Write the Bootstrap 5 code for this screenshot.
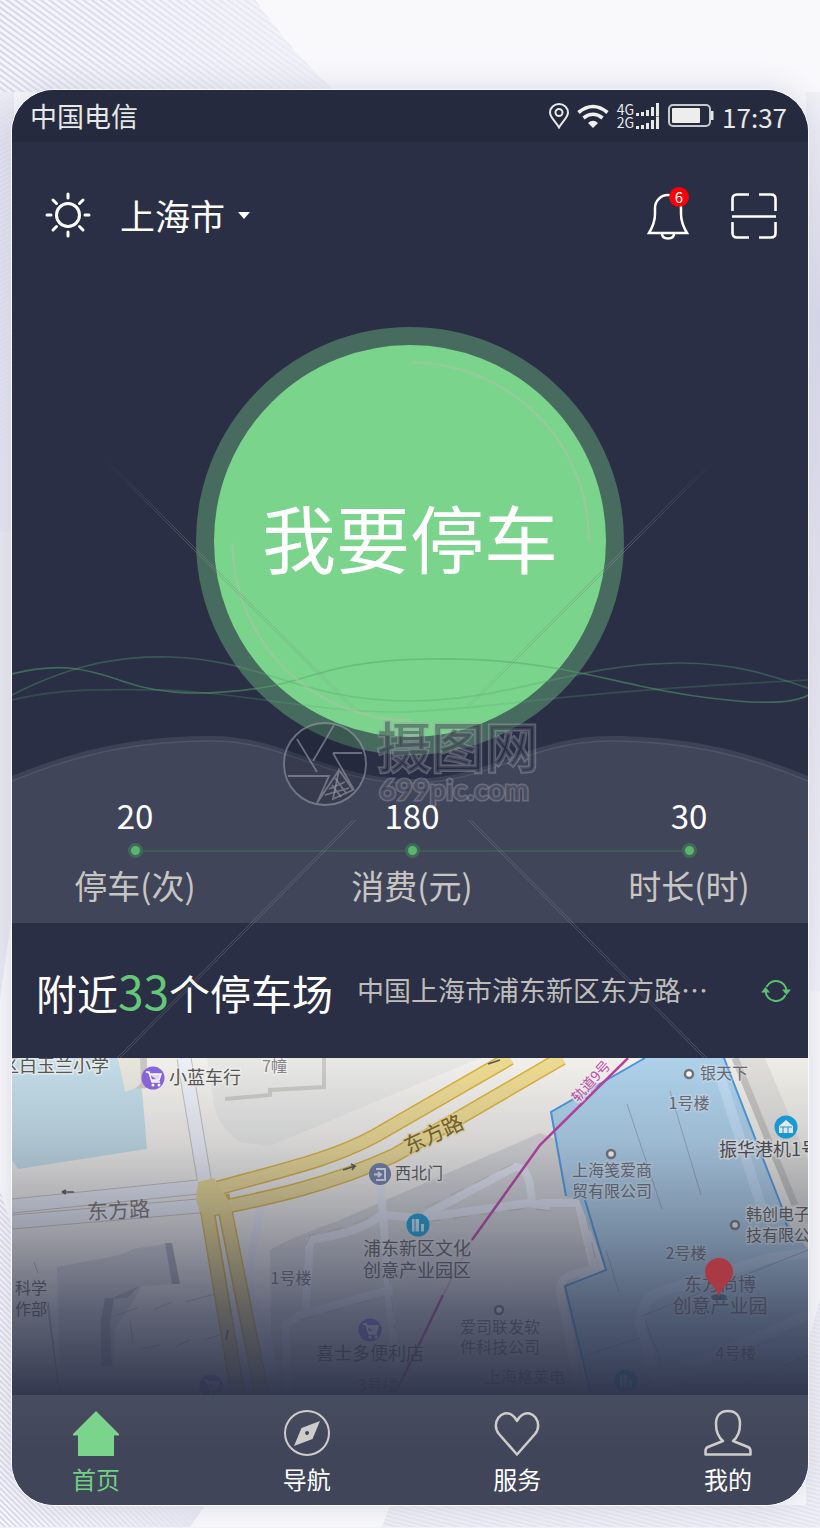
<!DOCTYPE html>
<html lang="zh-CN">
<head>
<meta charset="utf-8">
<meta name="viewport" content="width=device-width, initial-scale=1">
<title>停车</title>
<link href="https://cdn.jsdelivr.net/npm/bootstrap@5.3.0/dist/css/bootstrap.min.css" rel="stylesheet">
<script src="https://cdn.jsdelivr.net/npm/bootstrap@5.3.0/dist/js/bootstrap.bundle.min.js" defer></script>
<style>
  body { font-family: "Noto Sans CJK SC", sans-serif; background: #f1f1f8; color: #fff; }
  .page-wrap { padding: 90px 12px 22px; }
  .backdrop { inset: 0; z-index: -1; }
  .phone { background: #2a2f45; border-radius: 42px; box-shadow: 0 0 0 1px #fafafd, 0 0 30px #d4d4e2; }
  .status-bar { height: 52px; padding: 0 21px 0 18px; background: #252a3e; font-size: 27px; color: #e8e8e6; }
  .status-bar time { font-size: 26px; }
  .status-icons { gap: 8px; }
  .net-tags { font-size: 14px; line-height: 13px; }
  .top-bar { padding: 50px 31px 0 33px; height: 118px; }
  .plain-btn { background: none; border: 0; padding: 0; color: inherit; }
  .city-btn { font-size: 35px; line-height: 46px; gap: 13px; margin-left: 29px; }
  .city-caret { border: 6px solid transparent; border-top: 7px solid #fff; border-bottom: 0; }
  .top-actions { gap: 42px; }
  .count-badge { top: -5px; right: 0; width: 20px; height: 20px; background: #fb0007; font-size: 15px; line-height: 20px; }
  .park-btn { width: 428px; height: 428px; margin-top: 67px; padding: 0 0 12px; border: 18px solid #476b5e; background: #7ad48b; color: #fff; font-size: 74px; z-index: 1; }
  .over-art { inset: 0; pointer-events: none; z-index: 2; }
  .hill-art { inset: 0; }
  .stats { padding: 39px 58px 18px 62px; z-index: 1; }
  .stats::before { content: ""; position: absolute; left: 123px; right: 119px; top: 95px; height: 2px; background: #3d5c55; }
  .stat-item { width: 122px; }
  .stat-num { font-size: 33px; line-height: 42px; }
  .stat-dot { width: 15px; height: 15px; margin: 7px 0; border: 3px solid #40695a; background: #5bb56e; position: relative; }
  .stat-name { font-size: 33px; line-height: 40px; color: #c8c6c2; }
  .nearby { height: 135px; padding: 0 17px 0 24px; }
  .nearby h2 { font-size: 41px; font-weight: 400; }
  .nearby h2 span { font-size: 46px; color: #65c878; }
  .address { font-size: 27px; color: #bfbdb9; margin-left: 24px; }
  .map-art { height: 337px; }
  .tab-bar { height: 110px; padding: 12px 56px 0 60px; background: linear-gradient(#474d60, #414559 50%); }
  .tab-link { color: #fff; font-size: 24px; line-height: 36px; gap: 4px; text-decoration: none; }
  .tab-link.active { color: #72cf83; }
</style>
</head>
<body>
<div class="page-wrap position-relative">
  <svg class="backdrop position-absolute w-100 h-100" viewBox="0 0 820 1528" preserveAspectRatio="none" aria-hidden="true">
    <defs>
      <pattern id="stripeDown" width="5" height="5" patternUnits="userSpaceOnUse" patternTransform="rotate(36)"><path d="M0 1H5" stroke="#cdcee5" stroke-width="1.600"/></pattern>
      <pattern id="stripeUp" width="4" height="4" patternUnits="userSpaceOnUse" patternTransform="rotate(-28)"><path d="M0 1H4" stroke="#c9cbe0" stroke-width="1.200"/></pattern>
      <pattern id="stripeSoft" width="4" height="4" patternUnits="userSpaceOnUse" patternTransform="rotate(15)"><path d="M0 1H4" stroke="#dcdcea"/></pattern>
      <pattern id="stripeDiag" width="4" height="4" patternUnits="userSpaceOnUse" patternTransform="rotate(45)"><path d="M0 1H4" stroke="#c8c9e1" stroke-width="1.400"/></pattern>
      <linearGradient id="fadeRight"><stop offset="0" stop-color="#f4f4fa" stop-opacity="0"/><stop offset="1" stop-color="#f0f0f6" stop-opacity=".9"/></linearGradient>
      <linearGradient id="fadeCorner"><stop offset="0" stop-color="#f4f4fa" stop-opacity="0"/><stop offset="1" stop-color="#e6e6f2"/></linearGradient>
      <linearGradient id="leftFade" x1="0" y1="0" x2="0" y2="1"><stop offset="0" stop-color="#eeeef6" stop-opacity=".9"/><stop offset=".15" stop-color="#e2e3f0" stop-opacity=".3"/><stop offset="1" stop-color="#e0e1ef"/></linearGradient>
      <linearGradient id="sideFade" x1="0" y1="0" x2="0" y2="1"><stop offset="0" stop-color="#f0f0f6"/><stop offset=".25" stop-color="#d3d4e8"/><stop offset=".6" stop-color="#e2e2ef"/><stop offset="1" stop-color="#f1f1f8"/></linearGradient>
    </defs>
    <rect width="820" height="1528" fill="#f9f9fc"/>
    <path d="M0 0H255Q290 50 335 92H0Z" fill="#f4f4fa"/>
    <path d="M0 0H255Q290 50 335 92H0Z" fill="url(#stripeDown)"/>
    <path d="M0 0H255Q290 50 335 92H0Z" fill="url(#fadeRight)"/>
    <rect y="92" width="14" height="440" fill="#dfe0ee"/>
    <rect y="92" width="14" height="440" fill="url(#stripeUp)"/>
    <rect y="92" width="14" height="440" fill="url(#leftFade)"/>
    <path d="M0 532H14V900L0 1000Z" fill="#e6e6f1"/>
    <rect x="806" y="92" width="14" height="900" fill="url(#sideFade)"/>
    <path d="M0 1190Q60 1400 205 1506L190 1528H0Z" fill="url(#stripeDiag)"/>
    <path d="M0 1190Q60 1400 205 1506L190 1528H0Z" fill="url(#fadeCorner)"/>
    <path d="M390 1506H806V1350L820 1300V1528H382Z" fill="#efeff6"/>
    <path d="M390 1506H806V1350L820 1300V1528H382Z" fill="url(#stripeSoft)"/>
  </svg>

  <main class="phone position-relative overflow-hidden d-flex flex-column">
    <div class="status-bar d-flex align-items-center justify-content-between">
      <span>中国电信</span>
      <div class="status-icons d-flex align-items-center">
        <svg width="20" height="26" viewBox="0 0 20 26" fill="none" stroke="#e8e8e6" stroke-width="2" aria-hidden="true"><path d="M10 24.500C7 19 1 14.500 1 9.500A9 8.500 0 0 1 19 9.500C19 14.500 13 19 10 24.500Z"/><circle cx="10" cy="9.500" r="3.500"/></svg>
        <svg width="32" height="25" viewBox="0 0 32 25" fill="none" stroke="#f0f0ee" stroke-width="3.600" aria-hidden="true"><path d="M1.500 8.500Q16-3.500 30.500 8.500M6.500 14Q16 6.500 25.500 14"/><path d="M11 19Q16 14.500 21 19L16 24Z" fill="#f0f0ee" stroke="none"/></svg>
        <div class="d-flex align-items-center">
          <div class="net-tags">4G<br>2G</div>
          <svg width="26" height="27" viewBox="0 0 26 27" fill="#e8e8e6" aria-hidden="true"><path d="M2 10h3v3H2zM7 9h3v4H7zM12 7h3v6h-3zM17 4h3v9h-3zM22 0h3v13h-3zM2 23h3v3H2zM7 22h3v4H7zM12 20h3v6h-3zM17 17h3v9h-3zM22 13.500h3V26h-3z"/></svg>
        </div>
        <svg width="46" height="24" viewBox="0 0 46 24" aria-hidden="true"><rect x="1" y="1" width="41" height="21" rx="4" fill="none" stroke="#c3cbcc" stroke-width="2"/><rect x="4" y="4" width="28" height="15" rx="1" fill="#ededeb"/><path d="M43 7h2.500v9H43z" fill="#e8e8e6"/></svg>
        <time>17:37</time>
      </div>
    </div>

    <section class="position-relative">
      <svg class="hill-art position-absolute w-100 h-100" viewBox="12 142 796 781" preserveAspectRatio="none" aria-hidden="true">
        <path d="M12 776C90 744 150 736 212 736C285 736 330 779 411 779C490 779 530 736 610 736C690 736 750 752 808 776V923H12Z" fill="#3d4257"/>
        <path d="M12 781C90 749 150 741 212 741C285 741 330 783 411 783C490 783 530 741 610 741C690 741 750 757 808 781V923H12Z" fill="#414559"/>
        <path d="M12 781C90 749 150 741 212 741C285 741 330 783 411 783C490 783 530 741 610 741C690 741 750 757 808 781" fill="none" stroke="#50546a" stroke-width="1.500"/>
      </svg>
      <header class="top-bar position-relative d-flex justify-content-between align-items-start">
        <div class="d-flex align-items-center">
          <svg width="46" height="46" viewBox="0 0 46 46" fill="none" stroke="#fff" stroke-width="3" stroke-linecap="round" aria-hidden="true"><circle cx="23" cy="23" r="11.500"/><path d="M23 2v4M23 40v4M2 23h4M40 23h4M8 8l3.500 3.500M34.500 34.500L38 38M8 38l3.500-3.500M34.500 11.500L38 8"/></svg>
          <button type="button" class="plain-btn city-btn d-flex align-items-center">上海市 <i class="city-caret"></i></button>
        </div>
        <div class="top-actions d-flex align-items-center">
          <button type="button" class="plain-btn position-relative" aria-label="消息">
            <svg class="d-block" width="42" height="48" viewBox="0 0 42 48" fill="none" stroke="#fff" stroke-width="2.500" aria-hidden="true"><path d="M2 41Q8 31 8 22V16A13 13 0 0 1 34 16V22Q34 31 40 41Z"/><path d="M15 41.500Q15 46.500 21 46.500T27 41.500"/></svg>
            <span class="count-badge position-absolute rounded-circle text-center">6</span>
          </button>
          <button type="button" class="plain-btn" aria-label="扫一扫">
            <svg class="d-block" width="46" height="48" viewBox="0 0 46 48" fill="none" stroke="#fff" stroke-width="2.600" aria-hidden="true"><path d="M1.500 19V7Q1.500 2.500 6 2.500H18M28 2.500H40Q44.500 2.500 44.500 7V19M44.500 30V41Q44.500 45.500 40 45.500H28M18 45.500H6Q1.500 45.500 1.500 41V30M1 24.500H45"/></svg>
          </button>
        </div>
      </header>
      <button type="button" class="park-btn position-relative rounded-circle d-block mx-auto">我要停车</button>
      <div class="stats position-relative d-flex justify-content-between text-center">
        <div class="stat-item d-flex flex-column align-items-center"><div class="stat-num">20</div><i class="stat-dot rounded-circle"></i><div class="stat-name text-nowrap">停车(次)</div></div>
        <div class="stat-item d-flex flex-column align-items-center"><div class="stat-num">180</div><i class="stat-dot rounded-circle"></i><div class="stat-name text-nowrap">消费(元)</div></div>
        <div class="stat-item d-flex flex-column align-items-center"><div class="stat-num">30</div><i class="stat-dot rounded-circle"></i><div class="stat-name text-nowrap">时长(时)</div></div>
      </div>
      <svg class="over-art position-absolute w-100 h-100" viewBox="12 142 796 781" fill="none" aria-hidden="true">
        <g stroke="#58a870" stroke-width="1.700">
          <path stroke-opacity=".5" d="M12 674C60 662 85 668 125 682S210 695 260 688S330 660 430 659S580 673 640 686S785 710 808 695"/>
          <path stroke-opacity=".35" d="M12 695C80 660 130 656 170 657C265 660 300 701 410 701C510 701 575 663 680 663C735 663 770 675 808 688"/>
          <path stroke-opacity=".25" d="M12 700C60 688 110 689 165 690C240 692 310 712 400 712C490 710 540 693 808 680"/>
        </g>
        <path d="M411 362.500A178 178 0 0 1 589 541M232.500 543A178 178 0 0 0 411 720.500" stroke="#a0c6a4" stroke-opacity=".6" stroke-width="3"/>
      </svg>
    </section>

    <section class="nearby d-flex align-items-center">
      <h2 class="m-0 text-nowrap">附近<span>33</span>个停车场</h2>
      <span class="address text-nowrap">中国上海市浦东新区东方路…</span>
      <button type="button" class="plain-btn ms-auto" aria-label="刷新">
        <svg class="d-block" width="30" height="26" viewBox="0 0 30 26" fill="none" stroke="#5cbf72" stroke-width="2" aria-hidden="true"><path d="M5.500 9A10.500 10.500 0 0 1 25.500 13M24.500 17A10.500 10.500 0 0 1 4.500 13"/><path d="M21 11.500h9L25.500 17zM0 14.500h9L4.500 9z" fill="#5cbf72" stroke="none"/></svg>
      </button>
    </section>

    <svg class="map-art d-block w-100" viewBox="12 1058 796 337" preserveAspectRatio="xMidYMid slice" role="img" aria-label="地图">
      <defs>
        <linearGradient id="dusk" x1="0" y1="0" x2="0" y2="1"><stop offset="0" stop-color="#40465a" stop-opacity="0"/><stop offset=".25" stop-color="#44475a" stop-opacity=".17"/><stop offset=".5" stop-color="#3d4256" stop-opacity=".46"/><stop offset=".75" stop-color="#353b53" stop-opacity=".77"/><stop offset="1" stop-color="#2e344b" stop-opacity=".98"/></linearGradient>
      </defs>
      <rect x="12" y="1058" width="796" height="337" fill="#f2f0eb"/>
      <path d="M12 1058H123L142 1090L147 1149L18 1169L12 1160Z" fill="#c3dce8"/>
      <path d="M118 1058H147V1084L125 1092Z" fill="#e9e7dc"/>
      <path d="M140 1058H147V1088L135 1089L141 1083Z" fill="#c9c8c3"/>
      <path d="M207 1058H480L270 1146L240 1142Q217 1125 214 1105Z" fill="#e8e8e5"/>
      <path d="M225 1099L270 1095V1090L324 1087V1058" fill="none" stroke="#cbcac5" stroke-width="4"/>
      <path d="M270 1250Q285 1240 340 1220L540 1133L558 1140L575 1205L590 1270L570 1285L585 1395H272Z" fill="#d9d9da"/>
      <path d="M57 1267L120 1255L133 1249L170 1243L178 1284L142 1286L115 1330L113 1368H60Z" fill="#d8d9dc"/>
      <path d="M165 1243H172L180 1284H172ZM105 1298H114L110 1322L112 1366H101V1320Z" fill="#a8abb7"/>
      <path d="M114 1298L138 1287L128 1297ZM34 1262l4 11" fill="#b5b6be" stroke="#b0b1b8"/>
      <g fill="none" stroke="#bcb9b3">
        <g stroke-width="15"><path d="M184 1058L206 1190M12 1206L208 1186M12 1222L210 1205" stroke="#c3bfb8"/><path d="M184 1058L206 1190M12 1206L208 1186M12 1222L210 1205" stroke="#edf0f8" stroke-width="13"/></g>
        <path d="M108 1318L138 1308M155 1309L172 1302M185 1302L215 1294M140 1349L160 1345M175 1347L190 1340M205 1340L220 1335M130 1320L133 1343M47 1305L60 1395"/>
        <path d="M48 1302L58 1384" stroke="#9a9ca8"/>
      </g>
      <g fill="none" stroke="#e8ebf5" stroke-width="8" stroke-linejoin="round">
        <path d="M262 1200L249 1270Q248 1300 265 1325L277 1395"/>
        <path d="M380 1180L383 1215L390 1310L397 1370M383 1213Q365 1232 310 1240L306 1310M383 1215L420 1218L528 1203L550 1206M425 1215L515 1167Q530 1165 532 1203M385 1291L300 1315L285 1325L288 1395"/>
        <path d="M540 1203L580 1203L597 1268L570 1275Q555 1282 562 1300L580 1395"/>
      </g>
      <g fill="none" stroke="#c9c5b8" stroke-dasharray="16 12"><path d="M306 1245L310 1235Q365 1225 378 1210M425 1222L528 1208L550 1211M425 1208L513 1164M300 1320L380 1297M386 1240L395 1330M586 1215L596 1262"/></g>
      <path d="M551 1112L645 1058H724L790 1225L808 1250V1395H592L565 1286L606 1270L579 1200L566 1196Z" fill="#aed1ea"/>
      <path d="M700 1058H808V1250L780 1205Z" fill="#efede6"/><path d="M735 1058H765L808 1160V1225L793 1205Z" fill="#e0dfda"/>
      <path d="M735 1058L795 1205" stroke="#c4c3bf" stroke-width="7"/>
      <path d="M700 1058H724L780 1205L790 1235L808 1250H750Z" fill="#aed1ea"/>
      <g fill="none" stroke="#c0dcf5" stroke-width="10" stroke-linejoin="round"><path d="M720 1075L764 1215M808 1253L770 1258L660 1292Q640 1300 640 1325L660 1395M660 1380L808 1315M660 1395L690 1360"/></g>
      <path d="M627 1104L662 1209M670 1091L701 1195M606 1250L619 1292M586 1355L640 1338M642 1316L808 1250M645 1320L662 1365M725 1395L808 1355" stroke="#8fa7bc" fill="none"/>
      <path d="M645 1058L551 1112L566 1196M585 1200L606 1270L565 1286L591 1395M724 1058L781 1205L788 1230" fill="none" stroke="#4c98e0" stroke-width="2"/>
      <g fill="none" stroke-linejoin="round">
        <path d="M204 1192C290 1168 330 1160 375 1136L510 1058M208 1210C270 1198 330 1185 395 1155L562 1058" stroke="#d9b13c" stroke-width="15"/>
        <path d="M204 1190L238 1395M222 1195L262 1395" stroke="#d9b13c" stroke-width="15"/>
        <path d="M204 1192C290 1168 330 1160 375 1136L510 1058M208 1210C270 1198 330 1185 395 1155L562 1058" stroke="#eedb92" stroke-width="12"/>
        <path d="M204 1192L238 1395M224 1204L262 1395" stroke="#ecd683" stroke-width="12"/>
      </g>
      <path d="M198 1182L214 1178L232 1206L226 1212L200 1212L196 1200Z" fill="#ecd98c"/>
      <path d="M628 1058L540 1145L472 1240M443 1295L397 1390" stroke="#bd3fa0" stroke-width="2.500" fill="none"/>
      <path d="M472 1240L443 1295" stroke="#d9a0cf" stroke-width="1.500"/>
      <g stroke="#555" fill="none" stroke-width="1.500"><path d="M74 1192H62l4-2M62 1192l4 2M343 1170l12-4-4-2M355 1166l-3 4M500 1060l-12 4M228 1330l-2 10"/></g>
      <g font-size="18" fill="#555" stroke="#f5f4f0" stroke-opacity=".75" stroke-width="3" paint-order="stroke">
        <text x="1" y="1072">区白玉兰小学</text><text x="169" y="1084">小蓝车行</text><text x="395" y="1179" font-size="16">西北门</text>
        <text x="262" y="1072" font-size="16" fill="#888">7幢</text>
        <text x="87" y="1218" font-size="21" fill="#776d66" stroke="none" transform="rotate(-3 117 1210)">东方路</text>
        <text x="401" y="1142" font-size="21" fill="#786324" stroke="#eedb92" transform="rotate(-25 432 1132)">东方路</text>
        <text x="578" y="1103" font-size="14" fill="#c34fad" transform="rotate(-48 578 1103)">轨道9号</text>
        <g text-anchor="middle" stroke-opacity=".3">
          <text x="417" y="1255">浦东新区文化</text><text x="417" y="1277">创意产业园区</text><text x="370" y="1360">喜士多便利店</text>
          <g font-size="16" fill="#696974"><text x="291" y="1284">1号楼</text><text x="500" y="1333">爱司联发软</text><text x="500" y="1353">件科技公司</text><text x="612" y="1176">上海笺爱商</text><text x="612" y="1197">贸有限公司</text><text x="724" y="1079">银天下</text><text x="689" y="1109">1号楼</text><text x="686" y="1259">2号楼</text><text x="736" y="1359">4号楼</text><text x="378" y="1391">3号楼</text><text x="525" y="1383">上海格莱电</text></g>
          <g fill="#6d6873"><text x="720" y="1291">东方尚博</text><text x="720" y="1313" font-size="19">创意产业园</text></g>
        </g>
        <g font-size="16"><text x="719" y="1156" font-size="18" fill="#484850">振华港机1号</text><text x="746" y="1220">韩创电子科</text><text x="746" y="1241">技有限公司</text><text x="15" y="1294" stroke-opacity=".2">科学</text><text x="15" y="1315" stroke-opacity=".2">作部</text></g>
      </g>
      <g fill="#fff" stroke="#747477" stroke-width="2.500"><circle cx="689" cy="1074" r="4"/><circle cx="611" cy="1154" r="4"/><circle cx="735" cy="1225" r="4"/><circle cx="499" cy="1310" r="4"/></g>
      <g id="cartPin"><circle cx="153" cy="1078" r="11.500" fill="#8a66e0"/><path d="M146 1072h3l3 10h8M149 1074h12l-2 6h-8" stroke="#fff" stroke-width="1.500" fill="#e6dcff"/><circle cx="153" cy="1085" r="1.500" fill="#fff"/><circle cx="159" cy="1085" r="1.500" fill="#fff"/></g>
      <use href="#cartPin" x="217" y="252"/><use href="#cartPin" x="58" y="308"/>
      <circle cx="380" cy="1174" r="11" fill="#6e7da6"/><path d="M376 1169h9v11h-9M374 1174.500h7M378 1172l3 2.500-3 2.500" stroke="#dfe3f0" stroke-width="2" fill="none"/>
      <g id="officePin"><circle cx="418" cy="1225" r="11.500" fill="#109ed8"/><path d="M412 1219h7v13h-7zM421 1224h3v8h-3z" fill="#cfeefa"/><path d="M415 1219v13M410 1232h16" stroke="#109ed8"/></g>
      <use href="#officePin" x="208" y="156"/>
      <circle cx="786" cy="1127" r="11.500" fill="#10a5e6"/><path d="M779 1126l7-6 7 6v7h-14z" fill="#fff"/><path d="M780 1127h12M783 1127v6M788 1127v6" stroke="#10a5e6"/>
      <ellipse cx="719" cy="1297" rx="8" ry="3" fill="#1e4e75" fill-opacity=".7"/>
      <rect x="12" y="1058" width="796" height="337" fill="url(#dusk)"/>
      <path d="M719 1297C716 1285 705 1282 705 1272A14 14 0 0 1 733 1272C733 1282 722 1285 719 1297Z" fill="#a93a43"/>
    </svg>

    <nav class="tab-bar d-flex justify-content-between align-items-start" aria-label="主导航">
      <a href="#" class="tab-link active d-flex flex-column align-items-center" aria-current="page">
        <svg width="48" height="50" viewBox="0 0 48 50" fill="#7ad48b" aria-hidden="true"><path d="M24 4L47 27V28.500H42V49H6V28.500H1V27Z"/></svg>首页</a>
      <a href="#" class="tab-link d-flex flex-column align-items-center">
        <svg width="48" height="50" viewBox="0 0 48 50" aria-hidden="true"><circle cx="24" cy="26" r="22" fill="none" stroke="#cfcdc9" stroke-width="2"/><path fill="#cfcdc9" fill-rule="evenodd" d="M37 14L29.500 32L11 39L18.500 21ZM24 24a2 2 0 1 0 .1 0Z"/></svg>导航</a>
      <a href="#" class="tab-link d-flex flex-column align-items-center">
        <svg width="48" height="50" viewBox="0 0 48 50" fill="none" stroke="#cfcdc9" stroke-width="2.500" stroke-linejoin="round" aria-hidden="true"><path d="M24 47.500L6 27C-3 16 9 1 19 8Q22 10 24 14Q26 10 29 8C39 1 51 16 42 27Z"/></svg>服务</a>
      <a href="#" class="tab-link d-flex flex-column align-items-center">
        <svg width="48" height="50" viewBox="0 0 48 50" fill="none" stroke="#cfcdc9" stroke-width="2.500" stroke-linejoin="round" aria-hidden="true"><path d="M19 34C14 30 12 24 12 17C12 8 17 4 24 4S36 8 36 17C36 24 34 30 29 34L44 40Q46.500 41 46.500 44V47.500H1.500V44Q1.500 41 4 40Z"/></svg>我的</a>
    </nav>

    <svg class="over-art position-absolute w-100 h-100" viewBox="12 90 796 1415" fill="none" aria-hidden="true">
      <defs>
        <linearGradient id="lineFadeL" gradientUnits="userSpaceOnUse" x1="105" y1="458" x2="355" y2="708"><stop offset="0" stop-color="#8b8f96" stop-opacity="0"/><stop offset=".4" stop-color="#808a88" stop-opacity=".5"/><stop offset="1" stop-color="#6f8f78" stop-opacity=".2"/></linearGradient>
        <linearGradient id="lineFadeR" gradientUnits="userSpaceOnUse" x1="715" y1="458" x2="465" y2="708"><stop offset="0" stop-color="#8b8f96" stop-opacity="0"/><stop offset=".4" stop-color="#808a88" stop-opacity=".5"/><stop offset="1" stop-color="#6f8f78" stop-opacity=".2"/></linearGradient>
      </defs>
      <path d="M105 458L355 708M105 461L352 708" stroke="url(#lineFadeL)"/>
      <path d="M715 458L465 708M715 461L468 708" stroke="url(#lineFadeR)"/>
      <path d="M353 820L117 1058M356 820L120 1058M468 820L704 1058M471 820L707 1058" stroke="#8b8f9c" stroke-opacity=".35"/>
      <g stroke="#9a9ca8" stroke-opacity=".6" stroke-width="1.800" fill="#10131f" fill-opacity=".2">
        <circle cx="325" cy="764" r="41"/>
        <path fill="none" d="M297 739L317 772M288 776H329L317 803M334 725L313 761M333 753H362M333 753L354 790M339 770L317 803M339 770L353 790L333 799Z"/>
        <path fill="none" d="M335 778L346 793M332 785L341 797M329 789L345 782M325 795L349 788"/>
      </g>
      <g fill="#23273a" fill-opacity=".4" stroke="#a0a2ae" stroke-opacity=".45" stroke-width="3" paint-order="stroke">
        <text x="377" y="768" font-size="54" font-weight="500">摄图网</text>
        <text x="379" y="800" font-size="29" font-family="Lato, sans-serif" font-weight="700">699pic.com</text>
      </g>
    </svg>
  </main>
</div>
</body>
</html>
